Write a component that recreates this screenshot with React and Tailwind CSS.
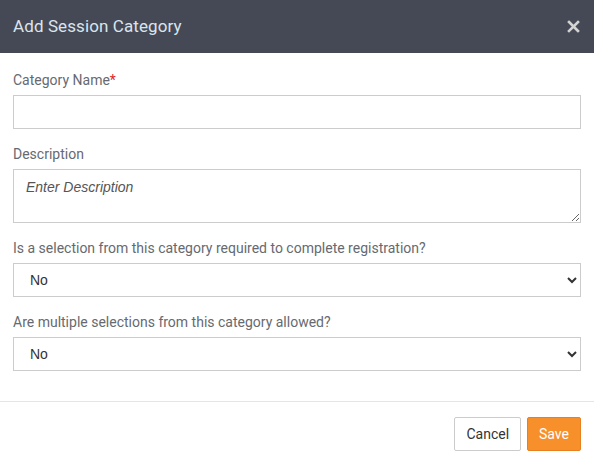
import React from 'react';

const Label = ({ children }) => (
    <label className="block text-[14px] leading-5 text-[#666a70] mb-[5px]">{children}</label>
);

const SelectBox = () => (
    <select className="block w-full h-[34px] border border-[#cccccc] bg-white pl-[12px] pr-2 text-[14px] text-[#333] font-['Liberation_Sans',Arial,sans-serif] outline-none">
        <option>No</option>
        <option>Yes</option>
    </select>
);

const App = () => {
    return (
        <div className="w-[594px] h-[463px] bg-white font-['Roboto',sans-serif] flex flex-col">
            <div className="h-[53px] bg-[#454955] flex items-center justify-between pl-[13px] pr-[13px]">
                <h1 className="text-[17px] text-[#dbe4ee] tracking-[0.1px]">Add Session Category</h1>
                <button className="text-[#d2d2d2] w-4 h-4 flex items-center justify-center">
                    <svg width="13" height="13" viewBox="0 0 13 13">
                        <path d="M2 2 L11 11 M11 2 L2 11" stroke="currentColor" strokeWidth="2.6" strokeLinecap="square" />
                    </svg>
                </button>
            </div>

            <div className="px-[13px] pt-[17px] pb-[30px] flex flex-col">
                <Label>
                    Category Name<span className="text-[#d9262e]">*</span>
                </Label>
                <input className="block w-full h-[34px] border border-[#cccccc] px-3 text-[14px] outline-none" />

                <div className="mt-[15px]">
                    <Label>Description</Label>
                    <textarea
                        placeholder="Enter Description"
                        className="block w-full h-[54px] border border-[#cccccc] px-3 py-[7px] text-[14px] font-['Liberation_Sans',Arial,sans-serif] italic placeholder:text-[#555] outline-none"
                    />
                </div>

                <div className="mt-[15px]">
                    <Label>Is a selection from this category required to complete registration?</Label>
                    <SelectBox />
                </div>

                <div className="mt-[15px]">
                    <Label>Are multiple selections from this category allowed?</Label>
                    <SelectBox />
                </div>
            </div>

            <div className="border-t border-[#e5e5e5] flex justify-end gap-[6px] px-[13px] pt-[15px]">
                <button className="h-[34px] px-[11px] border border-[#cccccc] rounded-[2px] bg-white text-[14px] text-[#333]">
                    Cancel
                </button>
                <button className="h-[34px] px-[11px] border border-[#e8801f] rounded-[2px] bg-[#f7902b] text-[14px] text-white">
                    Save
                </button>
            </div>
        </div>
    );
};

export default App;
